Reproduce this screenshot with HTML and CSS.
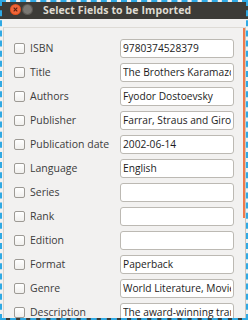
FILE: index.html
```html
<!DOCTYPE html>
<html lang="en">
<head>
  <meta charset="UTF-8" />
  <title>Select Fields to be Imported</title>
  <link rel="stylesheet" href="styles.css">
</head>
<body>
  <div class="window">
    <div class="titlebar">
      <svg class="win-btn" width="11" height="11" viewBox="0 0 11 11">
        <circle cx="5.5" cy="5.5" r="5.5" fill="#e4531f"/>
        <circle cx="5.5" cy="5.5" r="4.6" fill="#f0663a"/>
        <path d="M3.7 3.7 L7.3 7.3 M7.3 3.7 L3.7 7.3" stroke="#5a2010" stroke-width="1.1"/>
      </svg>
      <svg class="win-btn" width="11" height="11" viewBox="0 0 11 11">
        <circle cx="5.5" cy="5.5" r="5.5" fill="#5d5b56"/>
        <circle cx="5.5" cy="5.5" r="4.4" fill="#7a7873"/>
      </svg>
      <div class="title">Select Fields to be Imported</div>
    </div>
    <div class="body">
      <div class="frame">
        <div class="fields">
          <input type="checkbox" class="check"><span class="label">ISBN</span><input class="field" type="text" value="9780374528379">
          <input type="checkbox" class="check"><span class="label">Title</span><input class="field" type="text" value="The Brothers Karamazov">
          <input type="checkbox" class="check"><span class="label">Authors</span><input class="field" type="text" value="Fyodor Dostoevsky">
          <input type="checkbox" class="check"><span class="label">Publisher</span><input class="field" type="text" value="Farrar, Straus and Giroux">
          <input type="checkbox" class="check"><span class="label">Publication date</span><input class="field" type="text" value="2002-06-14">
          <input type="checkbox" class="check"><span class="label">Language</span><input class="field" type="text" value="English">
          <input type="checkbox" class="check"><span class="label">Series</span><input class="field" type="text" value="">
          <input type="checkbox" class="check"><span class="label">Rank</span><input class="field" type="text" value="">
          <input type="checkbox" class="check"><span class="label">Edition</span><input class="field" type="text" value="">
          <input type="checkbox" class="check"><span class="label">Format</span><input class="field" type="text" value="Paperback">
          <input type="checkbox" class="check"><span class="label">Genre</span><input class="field" type="text" value="World Literature, Movies">
          <input type="checkbox" class="check"><span class="label">Description</span><input class="field" type="text" value="The award-winning translation">
        </div>
        <div class="scroll-track"><div class="scroll-thumb"></div></div>
      </div>
    </div>
  </div>
</body>
</html>
```

FILE: styles.css
```css
body {
  margin: 0;
  padding: 0;
  font-family: 'Open Sans', 'Noto Sans', sans-serif;
  background: #f2f1f0;
}
.window {
  width: 248px;
  height: 320px;
  box-sizing: border-box;
  border: 2px dashed #2fa9e4;
  /* dark behind the dashes along the title bar */
  background: linear-gradient(#3c3b37 0, #3c3b37 17px, #f2f1f0 17px);
  display: flex;
  flex-direction: column;
  overflow: hidden;
}
.titlebar {
  height: 15px;
  flex: none;
  background: #3c3b37;
  display: flex;
  align-items: center;
  padding-left: 8px;
}
.win-btn {
  display: block;
  flex: none;
  margin-right: 1px;
}
.title {
  margin-left: 9px;
  color: #dfdbd2;
  font-size: 10.5px;
  font-weight: 700;
  white-space: nowrap;
  letter-spacing: 0.1px;
}
.body {
  flex: 1;
  display: flex;
  padding: 10px 0 0 1px;
  min-height: 0;
}
.frame {
  flex: 1;
  display: flex;
  border-top: 1px solid #dedbd6;
  border-left: 1px solid #d6d3ce;
  border-right: 1px solid #c9c6c0;
  min-height: 0;
  overflow: hidden;
}
.fields {
  flex: 1;
  display: grid;
  grid-template-columns: 11px 85px 114px;
  grid-auto-rows: 24px;
  column-gap: 5px;
  align-items: center;
  align-content: start;
  padding: 8px 0 0 10px;
}
.check {
  appearance: none;
  -webkit-appearance: none;
  margin: 0;
  width: 11px;
  height: 11px;
  box-sizing: border-box;
  border: 1px solid #9d9a95;
  border-radius: 2px;
  background: linear-gradient(#ffffff, #f0efed);
}
.label {
  font-size: 10.5px;
  color: #3c3c3c;
  white-space: nowrap;
}
.field {
  width: 114px;
  height: 19px;
  box-sizing: border-box;
  margin: 0;
  padding: 0 2px;
  border: 1px solid #bcb9b3;
  border-radius: 3px;
  background: #fff;
  font-family: inherit;
  font-size: 10.2px;
  color: #1c1c1c;
  outline: none;
}
.scroll-track {
  width: 2px;
  flex: none;
}
.scroll-thumb {
  height: 190px;
  background: #ef7a4c;
}
```
